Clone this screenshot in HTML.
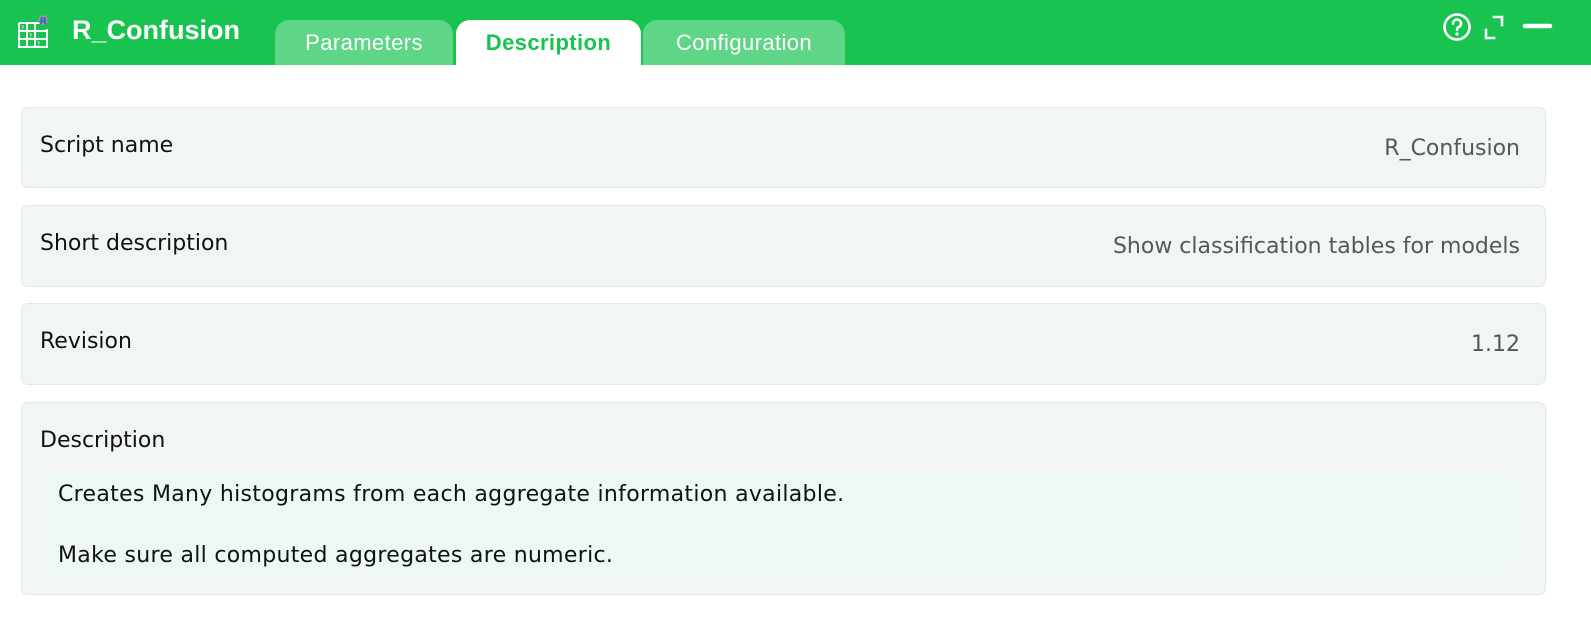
<!DOCTYPE html>
<html><head><style>
*{margin:0;padding:0;box-sizing:border-box}
body{width:1591px;height:626px;background:#fff;font-family:"DejaVu Sans",sans-serif;position:relative;overflow:hidden}
.hdr{position:absolute;left:0;top:0;width:1591px;height:65px;background:#19c34f}
.title{position:absolute;left:72px;top:15px;font-size:27px;font-weight:bold;color:#fff;font-family:"Liberation Sans",sans-serif}
.tab{position:absolute;top:20px;height:45px;border-radius:14px 14px 0 0;background:#5fd687;color:#fff;font-size:22px;text-align:center;line-height:46px;letter-spacing:0.4px;font-family:"Liberation Sans",sans-serif}
.tab.act{background:#fff;color:#19c34f;font-weight:bold}
.panel{position:absolute;left:21px;width:1525px;background:#f2f6f3;border:1px solid #e2e8e4;border-radius:7px}
.lbl{position:absolute;left:18px;top:25px;font-size:22px;color:#111}
.val{position:absolute;right:25px;top:28px;font-size:22px;color:#505860}
.inner{position:absolute;left:24px;top:71px;width:1469px;height:98px;background:#eef8f2;font-size:22px;color:#111;letter-spacing:0.3px}
</style></head><body>
<div class="hdr">
<svg style="position:absolute;left:16px;top:13px" width="34" height="36" viewBox="0 0 34 36">
<g stroke="#fff" stroke-width="2" fill="none">
<path d="M3 10H24M3 10V34H31V16M3 18H31M3 26H31M11 10V34M19 10V34"/>
</g>
<circle cx="27" cy="7" r="5" fill="#8a96a8"/>
<text x="24" y="11" font-size="9" font-weight="bold" fill="#1e5db3" font-family="Liberation Sans">R</text>
<text x="5" y="17" font-size="6" fill="#fff">?</text><text x="13" y="25" font-size="6" fill="#fff">?</text><text x="21" y="33" font-size="6" fill="#fff">?</text>
</svg>
<div class="title">R_Confusion</div>
<div class="tab" style="left:275px;width:178px">Parameters</div>
<div class="tab act" style="left:456px;width:185px">Description</div>
<div class="tab" style="left:643px;width:202px">Configuration</div>
<svg style="position:absolute;left:1440px;top:12px" width="140" height="32" viewBox="0 0 140 32">
<g stroke="#fff" stroke-width="2.6" fill="none" stroke-linecap="round">
<circle cx="17" cy="15" r="12.5"/>
<path d="M13 11.5a4 4 0 1 1 5.5 3.7c-1.2.5-1.5 1.3-1.5 2.6"/>
<path d="M46 18v8h8M62 13V5h-8" stroke-linecap="square"/>
<path d="M85 14h25" stroke-width="4.5"/>
</g>
<circle cx="17" cy="22" r="1.6" fill="#fff"/>
</svg>
</div>
<div class="panel" style="top:107px;height:81px"><div class="lbl">Script name</div><div class="val">R_Confusion</div></div>
<div class="panel" style="top:205px;height:82px"><div class="lbl">Short description</div><div class="val">Show classification tables for models</div></div>
<div class="panel" style="top:303px;height:82px"><div class="lbl">Revision</div><div class="val">1.12</div></div>
<div class="panel" style="top:402px;height:193px"><div class="lbl">Description</div>
<div class="inner"><div style="position:absolute;left:12px;top:8px">Creates Many histograms from each aggregate information available.</div><div style="position:absolute;left:12px;top:69px">Make sure all computed aggregates are numeric.</div></div>
</div>
</body></html>
